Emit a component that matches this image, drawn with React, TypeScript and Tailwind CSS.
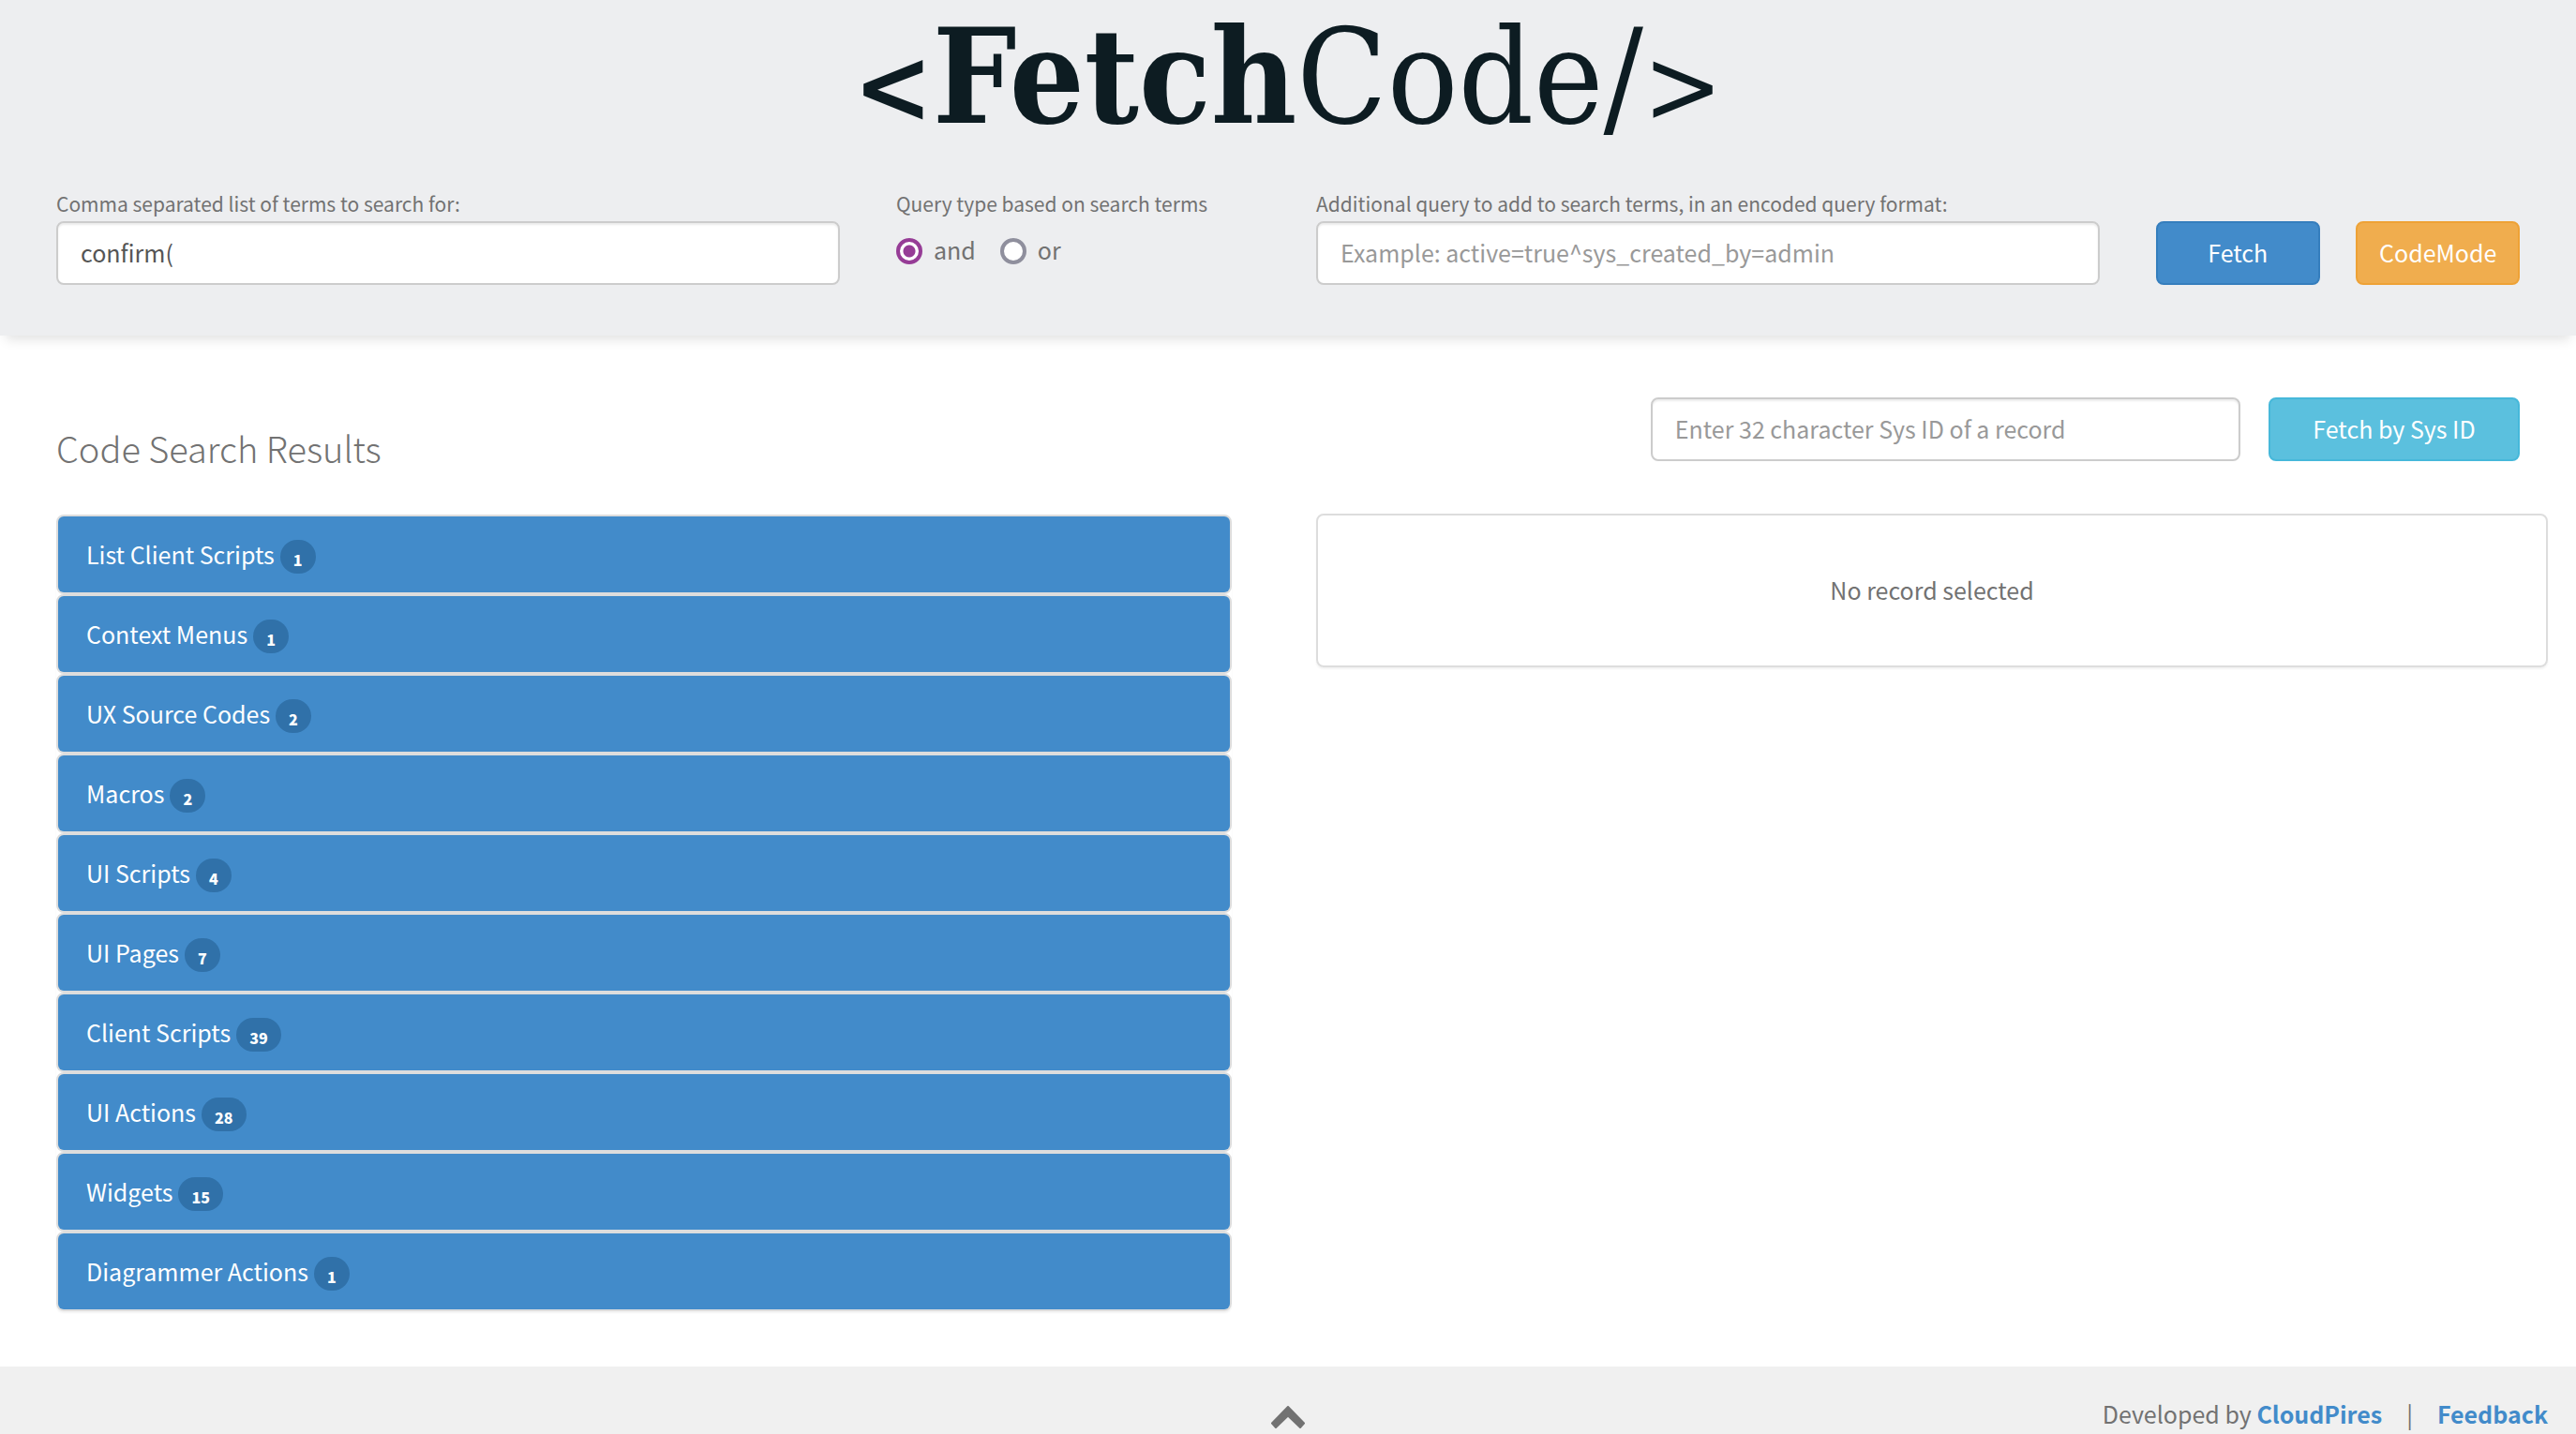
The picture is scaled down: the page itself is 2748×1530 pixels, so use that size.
import { useState } from "react";

const results: { name: string; count: number }[] = [
  { name: "List Client Scripts", count: 1 },
  { name: "Context Menus", count: 1 },
  { name: "UX Source Codes", count: 2 },
  { name: "Macros", count: 2 },
  { name: "UI Scripts", count: 4 },
  { name: "UI Pages", count: 7 },
  { name: "Client Scripts", count: 39 },
  { name: "UI Actions", count: 28 },
  { name: "Widgets", count: 15 },
  { name: "Diagrammer Actions", count: 1 },
];

const inputClass =
  "block h-[68px] rounded-lg border-2 border-[#cccccc] bg-white px-6 pb-0.5 text-[25px] text-[#555555] shadow-[inset_0_2px_2px_rgba(0,0,0,0.075)] outline-none placeholder:text-[#999999] placeholder:opacity-100";

const labelClass = "block h-8 text-[21px] leading-[26px]";

const radioClass =
  "size-7 appearance-none rounded-full border-4 border-[#8f8f9d] bg-white checked:border-[#963c96] checked:bg-[radial-gradient(circle,#963c96_6px,white_7px)]";

function Header() {
  const [mode, setMode] = useState("and");
  return (
    <header className="bg-[#edeef0] px-[30px] pb-[54px] shadow-[0_10px_12px_-6px_rgba(0,0,0,0.12)]">
      <h1 className="flex h-[204px] items-baseline justify-center whitespace-nowrap font-['DejaVu_Serif_Condensed','DejaVu_Serif',serif] text-[140px] leading-[164px] text-[#0d1c22]">
        <span className="text-[112px] font-bold">&lt;</span>
        <span className="font-bold">Fetch</span>
        <span>Code/</span>
        <span className="text-[112px]">&gt;</span>
      </h1>
      <form className="grid grid-cols-12" onSubmit={(e) => e.preventDefault()}>
        <div className="col-span-4 px-[30px]">
          <label htmlFor="terms" className={labelClass}>
            Comma separated list of terms to search for:
          </label>
          <input id="terms" className={`${inputClass} w-full`} defaultValue="confirm(" />
        </div>
        <fieldset className="col-span-2 px-[30px]">
          <legend className={labelClass}>Query type based on search terms</legend>
          <div className="flex items-center pt-4">
            {["and", "or"].map((value) => (
              <label key={value} className="mr-[26px] flex items-center gap-3 text-[25px] leading-7">
                <input
                  type="radio"
                  name="mode"
                  value={value}
                  checked={mode === value}
                  onChange={() => setMode(value)}
                  className={radioClass}
                />
                <span className="pb-1">{value}</span>
              </label>
            ))}
          </div>
        </fieldset>
        <div className="col-span-4 px-[30px]">
          <label htmlFor="extra" className={labelClass}>
            Additional query to add to search terms, in an encoded query format:
          </label>
          <input id="extra" className={`${inputClass} w-full`} placeholder="Example: active=true^sys_created_by=admin" />
        </div>
        <div className="col-span-2 flex items-end justify-between px-[30px]">
          <button type="submit" className="h-[68px] w-[45%] rounded-lg border-2 border-[#357ebd] bg-[#428bca] text-[25px] text-white">
            Fetch
          </button>
          <button type="button" className="h-[68px] w-[45%] rounded-lg border-2 border-[#eea236] bg-[#f0ad4e] text-[25px] text-white">
            CodeMode
          </button>
        </div>
      </form>
    </header>
  );
}

function ResultList() {
  return (
    <ul className="mr-[30px] rounded-lg shadow-[0_2px_2px_rgba(0,0,0,0.05)]">
      {results.map((item) => (
        <li key={item.name} className="rounded-lg border-2 border-[#dddddd] bg-[#dddddd]">
          <button type="button" className="flex h-[81px] w-full items-center gap-1.5 rounded-md bg-[#428bca] pb-0.5 pl-[30px] text-left text-[25px] leading-8 text-white">
            {item.name}
            <span className="mt-1.5 flex h-9 items-center rounded-full bg-[#3071a9] px-3.5 pt-1.5 text-[16px] leading-none font-black">
              {item.count}
            </span>
          </button>
        </li>
      ))}
    </ul>
  );
}

export default function App() {
  return (
    <div className="flex min-h-screen flex-col bg-white font-['Noto_Sans_CJK_SC',sans-serif] text-[#727272]">
      <Header />
      <main className="grid grow grid-cols-2 px-[30px]">
        <section className="px-[30px]">
          <h2 className="h-[191px] pt-[94px] text-[38px] leading-[52px] font-light">Code Search Results</h2>
          <ResultList />
        </section>
        <section className="pl-[30px]">
          <form className="flex h-[190px] items-start justify-end gap-[30px] pt-[66px] pr-[30px]" onSubmit={(e) => e.preventDefault()}>
            <input aria-label="Sys ID" className={`${inputClass} w-[49%]`} placeholder="Enter 32 character Sys ID of a record" />
            <button type="submit" className="h-[68px] w-[268px] shrink-0 rounded-lg border-2 border-[#46b8da] bg-[#5bc0de] text-[25px] text-white">
              Fetch by Sys ID
            </button>
          </form>
          <div className="flex h-[164px] items-center justify-center rounded-lg border-2 border-[#dddddd] pb-0.5 text-[25px] leading-8 shadow-[0_2px_2px_rgba(0,0,0,0.05)]">
            No record selected
          </div>
        </section>
      </main>
      <footer className="grid h-[72px] grid-cols-3 items-end bg-[#f0f0f0] px-[30px] text-[25px] leading-9">
        <button type="button" aria-label="Back to top" className="col-start-2 mb-1.5 justify-self-center">
          <svg viewBox="0 0 36 24" className="h-6 w-9" fill="#727272" stroke="#727272" strokeWidth="2" strokeLinejoin="round">
            <path d="M18 1 35 18.5 31 23 18 10.5 5 23 1 18.5Z" />
          </svg>
        </button>
        <div className="mb-1 flex justify-end whitespace-nowrap">
          <span>Developed by&nbsp;</span>
          <a href="#cloudpires" className="font-bold text-[#428bca]">CloudPires</a>
          <span className="mx-[26px]">|</span>
          <a href="#feedback" className="font-bold text-[#428bca]">Feedback</a>
        </div>
      </footer>
    </div>
  );
}
